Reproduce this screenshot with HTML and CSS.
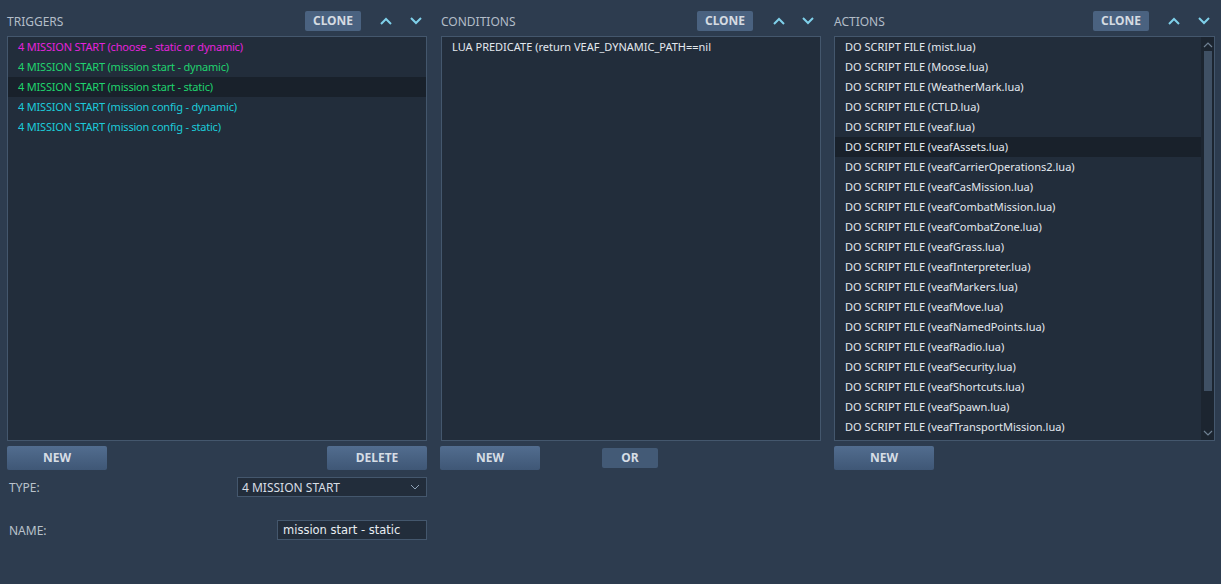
FILE: index.html
```html
<!DOCTYPE html>
<html>
<head>
<meta charset="utf-8">
<link rel="stylesheet" href="styles.css">
</head>
<body>
<div class="editor">
  <section class="col col-trig">
    <div class="head">
      <span class="title">TRIGGERS</span>
      <span class="clone">CLONE</span>
      <span class="arrow"><svg width="14" height="10" viewBox="0 0 14 10"><path d="M2 8 L7 3 L12 8" fill="none" stroke="#7fd0ea" stroke-width="2"/></svg></span>
      <span class="arrow"><svg width="14" height="10" viewBox="0 0 14 10"><path d="M2 2 L7 7 L12 2" fill="none" stroke="#7fd0ea" stroke-width="2"/></svg></span>
    </div>
    <div class="list">
      <div class="row tr c-mag">4 MISSION START (choose - static or dynamic)</div>
      <div class="row tr c-grn">4 MISSION START (mission start - dynamic)</div>
      <div class="row tr c-grn sel">4 MISSION START (mission start - static)</div>
      <div class="row tr c-cyn">4 MISSION START (mission config - dynamic)</div>
      <div class="row tr c-cyn">4 MISSION START (mission config - static)</div>
    </div>
    <div class="btns">
      <span class="btn">NEW</span>
      <span class="btn">DELETE</span>
    </div>
    <div class="field f-type">
      <span class="lbl">TYPE:</span>
      <span class="select">4 MISSION START<svg width="10" height="6" viewBox="0 0 10 6"><path d="M1 1 L5 5 L9 1" fill="none" stroke="#8fa3b8" stroke-width="1"/></svg></span>
    </div>
    <div class="field f-name">
      <span class="lbl">NAME:</span>
      <span class="input">mission start - static</span>
    </div>
  </section>

  <section class="col col-cond">
    <div class="head">
      <span class="title">CONDITIONS</span>
      <span class="clone">CLONE</span>
      <span class="arrow"><svg width="14" height="10" viewBox="0 0 14 10"><path d="M2 8 L7 3 L12 8" fill="none" stroke="#7fd0ea" stroke-width="2"/></svg></span>
      <span class="arrow"><svg width="14" height="10" viewBox="0 0 14 10"><path d="M2 2 L7 7 L12 2" fill="none" stroke="#7fd0ea" stroke-width="2"/></svg></span>
    </div>
    <div class="list">
      <div class="row">LUA PREDICATE (return VEAF_DYNAMIC_PATH==nil</div>
    </div>
    <div class="btns btns-cond">
      <span class="btn">NEW</span>
      <span class="btn btn-or">OR</span>
    </div>
  </section>

  <section class="col col-act">
    <div class="head">
      <span class="title">ACTIONS</span>
      <span class="clone">CLONE</span>
      <span class="arrow"><svg width="14" height="10" viewBox="0 0 14 10"><path d="M2 8 L7 3 L12 8" fill="none" stroke="#7fd0ea" stroke-width="2"/></svg></span>
      <span class="arrow"><svg width="14" height="10" viewBox="0 0 14 10"><path d="M2 2 L7 7 L12 2" fill="none" stroke="#7fd0ea" stroke-width="2"/></svg></span>
    </div>
    <div class="list list-scroll">
      <div class="rows">
        <div class="row">DO SCRIPT FILE (mist.lua)</div>
        <div class="row">DO SCRIPT FILE (Moose.lua)</div>
        <div class="row">DO SCRIPT FILE (WeatherMark.lua)</div>
        <div class="row">DO SCRIPT FILE (CTLD.lua)</div>
        <div class="row">DO SCRIPT FILE (veaf.lua)</div>
        <div class="row sel">DO SCRIPT FILE (veafAssets.lua)</div>
        <div class="row">DO SCRIPT FILE (veafCarrierOperations2.lua)</div>
        <div class="row">DO SCRIPT FILE (veafCasMission.lua)</div>
        <div class="row">DO SCRIPT FILE (veafCombatMission.lua)</div>
        <div class="row">DO SCRIPT FILE (veafCombatZone.lua)</div>
        <div class="row">DO SCRIPT FILE (veafGrass.lua)</div>
        <div class="row">DO SCRIPT FILE (veafInterpreter.lua)</div>
        <div class="row">DO SCRIPT FILE (veafMarkers.lua)</div>
        <div class="row">DO SCRIPT FILE (veafMove.lua)</div>
        <div class="row">DO SCRIPT FILE (veafNamedPoints.lua)</div>
        <div class="row">DO SCRIPT FILE (veafRadio.lua)</div>
        <div class="row">DO SCRIPT FILE (veafSecurity.lua)</div>
        <div class="row">DO SCRIPT FILE (veafShortcuts.lua)</div>
        <div class="row">DO SCRIPT FILE (veafSpawn.lua)</div>
        <div class="row">DO SCRIPT FILE (veafTransportMission.lua)</div>
      </div>
      <div class="sbar">
        <svg class="sarrow" width="10" height="6" viewBox="0 0 10 6"><path d="M1 5 L5 1 L9 5" fill="none" stroke="#6f8193" stroke-width="1.2"/></svg>
        <div class="strack"><div class="thumb"></div></div>
        <svg class="sarrow" width="10" height="6" viewBox="0 0 10 6"><path d="M1 1 L5 5 L9 1" fill="none" stroke="#6f8193" stroke-width="1.2"/></svg>
      </div>
    </div>
    <div class="btns">
      <span class="btn">NEW</span>
    </div>
  </section>
</div>
</body>
</html>
```

FILE: styles.css
```css
html, body {
  margin: 0;
  padding: 0;
}
body {
  background: #2d3c4f;
  width: 1221px;
  height: 584px;
  overflow: hidden;
  font-family: "Noto Sans", "Open Sans", sans-serif;
  font-size: 11px;
  color: #e6ebf0;
}
.editor {
  display: flex;
  padding-left: 7px;
}
.col {
  display: flex;
  flex-direction: column;
}
.col-trig { width: 420px; }
.col-cond { width: 381px; margin-left: 13px; }
.col-act { width: 381px; margin-left: 13px; }

.head {
  height: 36px;
  display: flex;
  align-items: center;
  padding-top: 6px;
  box-sizing: border-box;
}
.title {
  flex: 1;
  color: #b3bdc8;
  font-size: 12px;
}
.col-cond .title { padding-left: 1px; }
.clone {
  width: 56px;
  height: 20px;
  line-height: 20px;
  text-align: center;
  background: #4a6280;
  border-radius: 2px;
  color: #d5dbe2;
  font-weight: bold;
  font-size: 12px;
  margin-right: 18px;
}
.arrow {
  width: 14px;
  display: flex;
  justify-content: center;
}
.arrow + .arrow { margin-left: 16px; }
.col-trig .head { padding-right: 4px; }
.col-cond .head { padding-right: 6px; }
.col-act .head { padding-right: 4px; }
.col-cond .clone { margin-right: 19px; }
.col-cond .arrow + .arrow { margin-left: 15px; }

.list {
  height: 405px;
  box-sizing: border-box;
  border: 1px solid #44576d;
  background: #222d3b;
}
.col-cond .list { width: 380px; margin-left: 1px; }
.row {
  height: 20px;
  line-height: 20px;
  padding-left: 10px;
  white-space: nowrap;
  color: #e3e8ee;
}
.tr { letter-spacing: -0.2px; }
.sel { background: #19212b; }
.c-mag { color: #e522dc; }
.c-grn { color: #1fd36e; }
.c-cyn { color: #1ccbd9; }

.list-scroll {
  display: flex;
}
.rows { flex: 1; }
.sbar {
  width: 13px;
  background: #1c2530;
  display: flex;
  flex-direction: column;
  align-items: center;
}
.sarrow { margin: 5px 0 3px; }
.sbar .sarrow:last-child { margin: 3px 0 4px; }
.strack {
  flex: 1;
  width: 100%;
  display: flex;
  justify-content: center;
}
.thumb {
  width: 8px;
  height: 340px;
  background: #3f5064;
}

.btns {
  display: flex;
  justify-content: space-between;
  align-items: center;
  margin-top: 5px;
  height: 24px;
}
.btns-cond {
  justify-content: flex-start;
}
.btn {
  width: 100px;
  height: 24px;
  line-height: 24px;
  text-align: center;
  border-radius: 2px;
  background: linear-gradient(#526d8f, #3f5776);
  color: #d6dde5;
  font-weight: bold;
  font-size: 12px;
}
.btn-or {
  width: 56px;
  height: 20px;
  line-height: 20px;
  margin-left: 62px;
  background: #435a76;
}

.field {
  display: flex;
  justify-content: space-between;
  align-items: center;
  height: 20px;
}
.f-type { margin-top: 7px; }
.f-name { margin-top: 23px; }
.lbl {
  color: #b9c2cc;
  font-size: 12px;
  padding-left: 2px;
}
.select {
  width: 190px;
  height: 20px;
  box-sizing: border-box;
  border: 1px solid #44576d;
  background: #222d3b;
  display: flex;
  align-items: center;
  justify-content: space-between;
  padding: 0 6px 0 4px;
  font-size: 12px;
  color: #d8dee5;
}
.input {
  width: 150px;
  height: 20px;
  box-sizing: border-box;
  border: 1px solid #44576d;
  background: #222d3b;
  line-height: 19px;
  padding-left: 5px;
  font-family: "DejaVu Sans", sans-serif;
  font-size: 11.5px;
  color: #e8edf2;
}
```
